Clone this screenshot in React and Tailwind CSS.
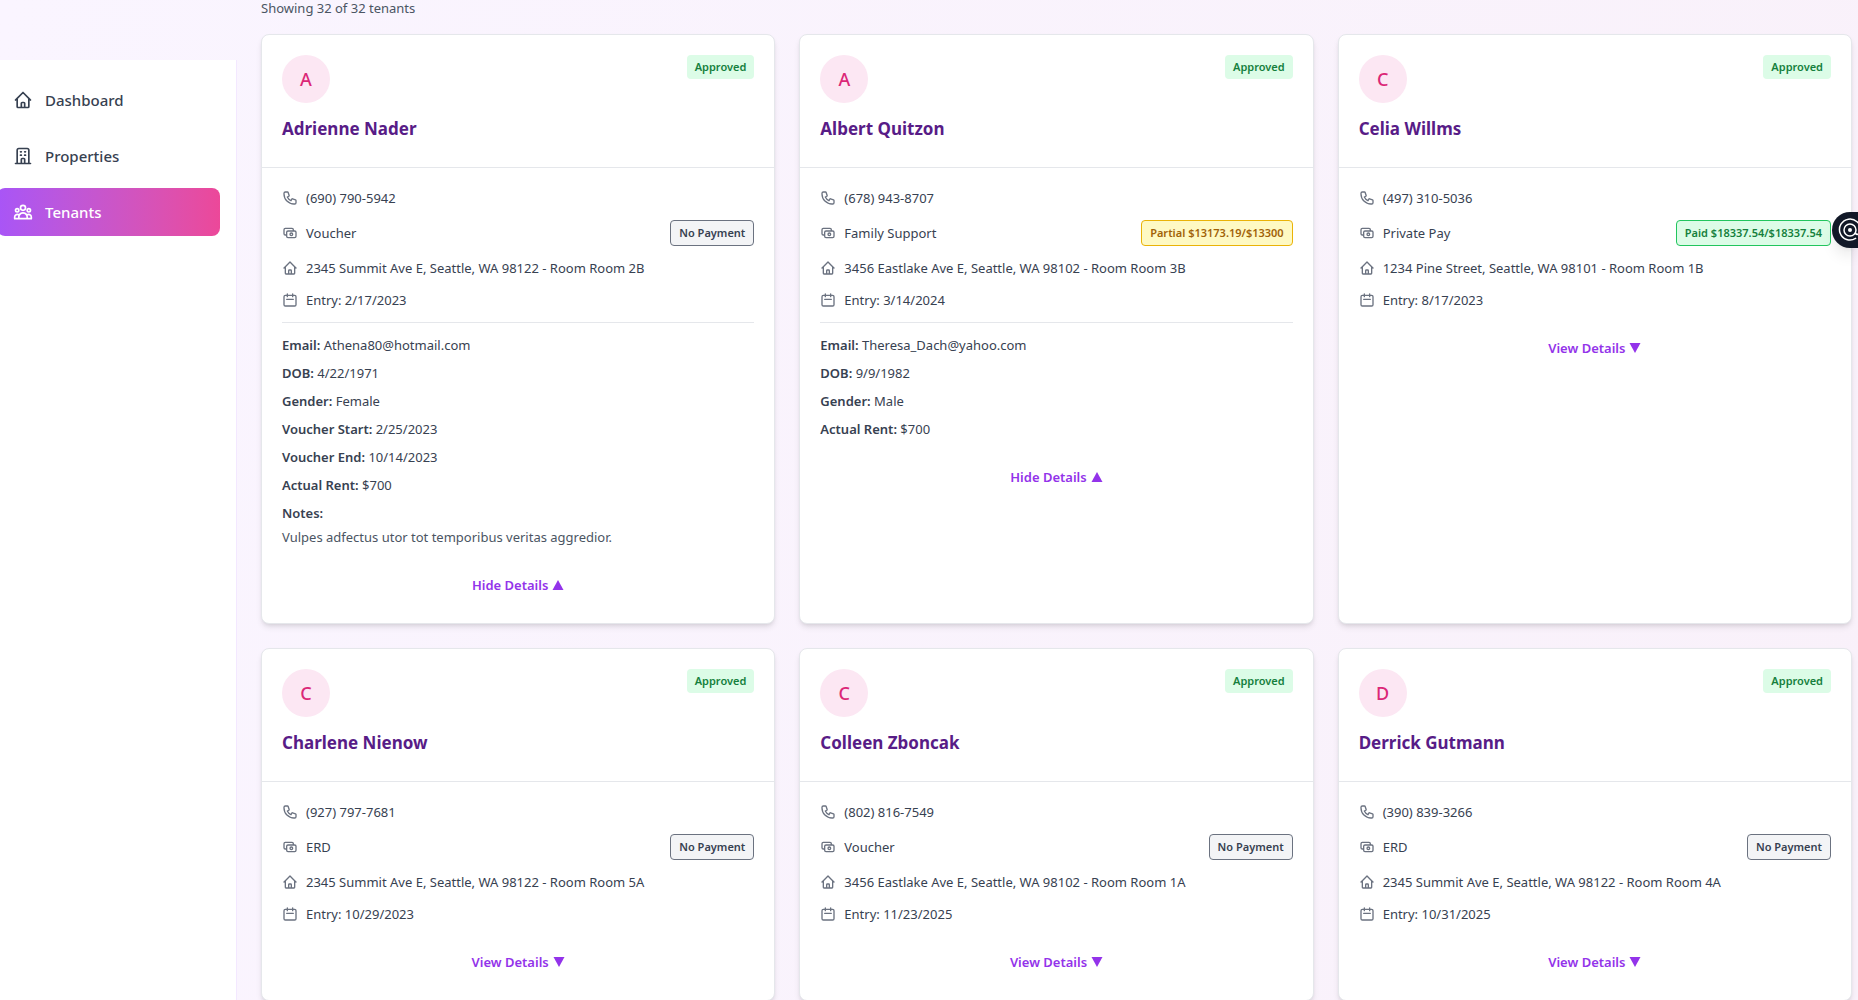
import { useState } from "react";
import {
  HiOutlineHome,
  HiOutlineOfficeBuilding,
  HiOutlineUserGroup,
  HiOutlinePhone,
  HiOutlineCash,
  HiOutlineCalendar,
} from "react-icons/hi";

const tenants = [
  {
    name: "Adrienne Nader",
    phone: "(690) 790-5942",
    type: "Voucher",
    payment: "No Payment",
    status: "none",
    address: "2345 Summit Ave E, Seattle, WA 98122 - Room Room 2B",
    entry: "2/17/2023",
    open: true,
    details: [
      ["Email", "Athena80@hotmail.com"],
      ["DOB", "4/22/1971"],
      ["Gender", "Female"],
      ["Voucher Start", "2/25/2023"],
      ["Voucher End", "10/14/2023"],
      ["Actual Rent", "$700"],
    ],
    notes: "Vulpes adfectus utor tot temporibus veritas aggredior.",
  },
  {
    name: "Albert Quitzon",
    phone: "(678) 943-8707",
    type: "Family Support",
    payment: "Partial $13173.19/$13300",
    status: "partial",
    address: "3456 Eastlake Ave E, Seattle, WA 98102 - Room Room 3B",
    entry: "3/14/2024",
    open: true,
    details: [
      ["Email", "Theresa_Dach@yahoo.com"],
      ["DOB", "9/9/1982"],
      ["Gender", "Male"],
      ["Actual Rent", "$700"],
    ],
  },
  {
    name: "Celia Willms",
    phone: "(497) 310-5036",
    type: "Private Pay",
    payment: "Paid $18337.54/$18337.54",
    status: "paid",
    address: "1234 Pine Street, Seattle, WA 98101 - Room Room 1B",
    entry: "8/17/2023",
    details: [],
  },
  {
    name: "Charlene Nienow",
    phone: "(927) 797-7681",
    type: "ERD",
    payment: "No Payment",
    status: "none",
    address: "2345 Summit Ave E, Seattle, WA 98122 - Room Room 5A",
    entry: "10/29/2023",
    details: [],
  },
  {
    name: "Colleen Zboncak",
    phone: "(802) 816-7549",
    type: "Voucher",
    payment: "No Payment",
    status: "none",
    address: "3456 Eastlake Ave E, Seattle, WA 98102 - Room Room 1A",
    entry: "11/23/2025",
    details: [],
  },
  {
    name: "Derrick Gutmann",
    phone: "(390) 839-3266",
    type: "ERD",
    payment: "No Payment",
    status: "none",
    address: "2345 Summit Ave E, Seattle, WA 98122 - Room Room 4A",
    entry: "10/31/2025",
    details: [],
  },
];

const paymentStyles = {
  none: "border-[#6b7280] bg-[#f3f4f6] text-[#374151]",
  partial: "border-[#eab308] bg-[#fef9c3] text-[#a16207]",
  paid: "border-[#22c55e] bg-[#dcfce7] text-[#15803d]",
};

function InfoRow({ icon: Icon, children, extra }) {
  return (
    <div className="flex items-center justify-between">
      <div className="flex items-center gap-2">
        <Icon className="size-4 shrink-0 text-[#6b7280]" />
        <span>{children}</span>
      </div>
      {extra}
    </div>
  );
}

function TenantCard({ tenant }) {
  const [open, setOpen] = useState(Boolean(tenant.open));
  return (
    <article className="rounded-lg border border-[#e5e7eb] bg-white shadow-md">
      <header className="border-b border-[#e5e7eb] px-5 pt-5 pb-6">
        <div className="flex items-start justify-between">
          <div className="flex size-12 items-center justify-center rounded-full bg-[#fce7f3] text-lg font-medium text-[#db2777]">
            {tenant.name[0]}
          </div>
          <span className="rounded bg-[#dcfce7] px-2 py-1 text-[11px] leading-4 font-semibold text-[#15803d]">
            Approved
          </span>
        </div>
        <h3 className="mt-3 text-[17px] leading-7 font-bold text-[#581c87]">{tenant.name}</h3>
      </header>
      <div className="px-5 pt-5 pb-7 text-[13px] leading-5 text-[#374151]">
        <div className="space-y-3">
          <InfoRow icon={HiOutlinePhone}>{tenant.phone}</InfoRow>
          <InfoRow
            icon={HiOutlineCash}
            extra={
              <span
                className={`rounded border px-2 py-1 text-[11px] leading-4 font-semibold ${paymentStyles[tenant.status]}`}
              >
                {tenant.payment}
              </span>
            }
          >
            {tenant.type}
          </InfoRow>
          <InfoRow icon={HiOutlineHome}>{tenant.address}</InfoRow>
          <InfoRow icon={HiOutlineCalendar}>Entry: {tenant.entry}</InfoRow>
          {open && (
            <div className="space-y-2 border-t border-[#e5e7eb] pt-3">
              {tenant.details.map(([label, value]) => (
                <p key={label}>
                  <span className="font-semibold">{label}:</span> {value}
                </p>
              ))}
              {tenant.notes && (
                <div>
                  <span className="font-semibold">Notes:</span>
                  <p className="mt-1 text-[#4b5563]">{tenant.notes}</p>
                </div>
              )}
            </div>
          )}
        </div>
        <div className="mt-7 flex justify-center">
          <button
            type="button"
            onClick={() => setOpen(!open)}
            className="flex items-center gap-1 font-semibold text-[#9333ea]"
          >
            {open ? "Hide Details" : "View Details"}
            <svg viewBox="0 0 12 12" className="size-3 fill-current" aria-hidden="true">
              <path d={open ? "M6 1 11.5 11H.5z" : "M.5 1h11L6 11z"} />
            </svg>
          </button>
        </div>
      </div>
    </article>
  );
}

const nav = [
  { label: "Dashboard", icon: HiOutlineHome },
  { label: "Properties", icon: HiOutlineOfficeBuilding },
  { label: "Tenants", icon: HiOutlineUserGroup, active: true },
];

export default function App() {
  return (
    <div className="flex h-screen overflow-hidden bg-[linear-gradient(100deg,#faf5ff,#f9f1fa)] font-['Noto_Sans','Open_Sans',sans-serif]">
      <aside className="mt-15 -ml-[19px] w-64 shrink-0 border-r border-[#f3e8ff] bg-white px-4 py-4">
        <nav className="space-y-2">
          {nav.map(({ label, icon: Icon, active }) => (
            <a
              key={label}
              href="#"
              className={`flex h-12 items-center gap-3 rounded-lg px-4 text-[15px] font-medium ${
                active ? "bg-linear-to-r from-[#a855f7] to-[#ec4899] text-white" : "text-[#374151]"
              }`}
            >
              <Icon className="size-5" />
              {label}
            </a>
          ))}
        </nav>
      </aside>
      <main className="min-w-0 flex-1 pr-1.5 pl-6">
        <p className="mb-[18px] text-[13px] leading-4 text-[#4b5563]">Showing 32 of 32 tenants</p>
        <div className="grid grid-cols-3 gap-6">
          {tenants.map((tenant) => (
            <TenantCard key={tenant.name} tenant={tenant} />
          ))}
        </div>
      </main>
      <button
        type="button"
        aria-label="Open assistant"
        className="fixed top-[212px] right-0 flex h-9 w-[26px] items-center overflow-hidden rounded-l-full bg-[#111827] pl-1.5 text-white shadow-lg"
      >
        <svg viewBox="0 0 24 24" className="size-6 shrink-0 fill-none stroke-current stroke-[1.5]" strokeLinecap="round">
          <path d="M17.6 20.4A10.5 10.5 0 1 1 22.5 12c0 4-3 5.5-5.2 3.4" />
          <circle cx="12" cy="12" r="6" />
          <circle cx="12" cy="12" r="2" className="fill-current stroke-none" />
        </svg>
      </button>
    </div>
  );
}
